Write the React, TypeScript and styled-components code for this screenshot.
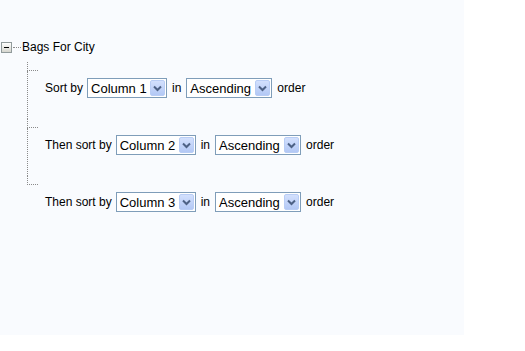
import { createGlobalStyle, styled } from 'styled-components'

const GlobalStyle = createGlobalStyle`
    html, body {
        margin: 0;
        padding: 0;
        background: #ffffff;
    }
    body {
        font-family: 'Liberation Sans', Arial, sans-serif;
        color: #000;
    }
`

const rules = [
    { label: 'Sort by', column: 'Column 1' },
    { label: 'Then sort by', column: 'Column 2' },
    { label: 'Then sort by', column: 'Column 3' },
]

const Chevron = () => (
    <svg width="9" height="7" viewBox="0 0 9 7">
        <path d="M1 1.5 L4.5 5 L8 1.5" fill="none" stroke="#4d6185" strokeWidth="2" />
    </svg>
)

const Combo = ({ value, width }: { value: string; width: number }) => (
    <ComboBox $width={width}>
        <ComboValue>{value}</ComboValue>
        <ComboButton>
            <Chevron />
        </ComboButton>
    </ComboBox>
)

export default function App() {
    return (
        <>
            <GlobalStyle />
            <Panel>
                <RootRow>
                    <Expander>
                        <Minus />
                    </Expander>
                    <RootStub />
                    <RootLabel>Bags For City</RootLabel>
                </RootRow>
                <Children>
                    {rules.map((rule, i) => (
                        <Node key={i}>
                            <Stub />
                            <NodeBody $last={i === rules.length - 1}>
                                <SortRow>
                                    <Label>{rule.label}</Label>
                                    <Combo value={rule.column} width={80} />
                                    <Label>in</Label>
                                    <Combo value="Ascending" width={86} />
                                    <Label>order</Label>
                                </SortRow>
                            </NodeBody>
                        </Node>
                    ))}
                </Children>
            </Panel>
        </>
    )
}

const Panel = styled.div`
    width: 464px;
    height: 335px;
    box-sizing: border-box;
    background: #f9fbfe;
    padding-top: 39px;
`

const RootRow = styled.div`
    display: flex;
    align-items: center;
    height: 16px;
    padding-left: 1px;
`

const Expander = styled.span`
    width: 9px;
    height: 9px;
    border: 1px solid #919b9c;
    background: linear-gradient(#ffffff, #d6d6ce);
    display: flex;
    align-items: center;
    justify-content: center;
`

const Minus = styled.span`
    width: 5px;
    height: 1px;
    background: #000;
`

const RootStub = styled.span`
    width: 8px;
    border-top: 1px dotted #8a8a8a;
    margin: 0 2px 0 1px;
`

const RootLabel = styled.span`
    font-size: 12px;
    margin-left: -1px;
`

const Children = styled.div`
    margin-left: 27px;
    margin-top: 7px;
`

const Node = styled.div`
    display: flex;
    flex-direction: column;
`

const Stub = styled.div`
    width: 10px;
    height: 8px;
    border-left: 1px dotted #8a8a8a;
    border-bottom: 1px dotted #8a8a8a;
`

const NodeBody = styled.div<{ $last: boolean }>`
    height: 48px;
    box-sizing: border-box;
    padding: 7px 0 0 17px;
    border-left: 1px dotted ${(p) => (p.$last ? 'transparent' : '#8a8a8a')};
`

const SortRow = styled.div`
    display: flex;
    align-items: center;
    gap: 5px;
    height: 20px;
`

const Label = styled.span`
    font-size: 12px;
    &:first-child {
        margin-right: -1px;
    }
`

const ComboBox = styled.span<{ $width: number }>`
    width: ${(p) => p.$width}px;
    height: 20px;
    box-sizing: border-box;
    border: 1px solid #7f9db9;
    background: #fff;
    display: flex;
    align-items: center;
    padding: 1px;
`

const ComboValue = styled.span`
    flex: 1;
    font-size: 13px;
    padding-left: 2px;
    white-space: nowrap;
`

const ComboButton = styled.span`
    width: 15px;
    height: 16px;
    box-sizing: border-box;
    border: 1px solid #b9cdf5;
    border-radius: 2px;
    background: linear-gradient(#d3e0fd, #b3c8f5);
    display: flex;
    align-items: center;
    justify-content: center;
`
